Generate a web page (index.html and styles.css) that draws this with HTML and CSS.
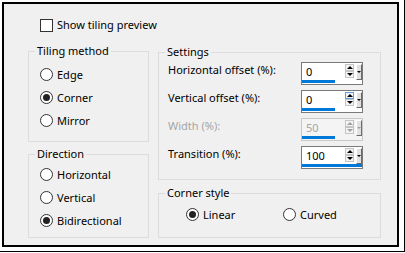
FILE: index.html
```html
<!DOCTYPE html>
<html lang="en">
<head>
    <meta charset="UTF-8">
    <title>Tiling</title>
    <link rel="stylesheet" href="styles.css">
</head>
<body>
<div class="shot">
    <div class="dialog">
        <div class="check-row"><span class="checkbox"></span>Show tiling preview</div>

        <div class="columns">
            <div class="col">
                <div class="group group-tiling">
                    <div class="group-title">Tiling method</div>
                    <div class="radio-list">
                        <div class="radio-row"><span class="radio"></span>Edge</div>
                        <div class="radio-row"><span class="radio checked"></span>Corner</div>
                        <div class="radio-row"><span class="radio"></span>Mirror</div>
                    </div>
                </div>
                <div class="group group-direction">
                    <div class="group-title">Direction</div>
                    <div class="radio-list">
                        <div class="radio-row"><span class="radio"></span>Horizontal</div>
                        <div class="radio-row"><span class="radio"></span>Vertical</div>
                        <div class="radio-row"><span class="radio checked"></span>Bidirectional</div>
                    </div>
                </div>
            </div>

            <div class="col">
                <div class="group group-settings">
                    <div class="group-title">Settings</div>
                    <div class="field-list">
                        <div class="field-row">
                            <span class="field-label">Horizontal offset (%):</span>
                            <div class="spin">
                                <div class="spin-top">
                                    <span class="spin-value">0</span>
                                    <div class="spin-arrows"><span class="arrow up"></span><span class="arrow down"></span></div>
                                    <span class="spin-drop"></span>
                                </div>
                                <div class="spin-bar"></div>
                            </div>
                        </div>
                        <div class="field-row">
                            <span class="field-label">Vertical offset (%):</span>
                            <div class="spin">
                                <div class="spin-top">
                                    <span class="spin-value">0</span>
                                    <div class="spin-arrows"><span class="arrow up hover"></span><span class="arrow down"></span></div>
                                    <span class="spin-drop"></span>
                                </div>
                                <div class="spin-bar"></div>
                            </div>
                        </div>
                        <div class="field-row disabled">
                            <span class="field-label">Width (%):</span>
                            <div class="spin">
                                <div class="spin-top">
                                    <span class="spin-value">50</span>
                                    <div class="spin-arrows"><span class="arrow up"></span><span class="arrow down"></span></div>
                                    <span class="spin-drop"></span>
                                </div>
                                <div class="spin-bar"></div>
                            </div>
                        </div>
                        <div class="field-row">
                            <span class="field-label">Transition (%):</span>
                            <div class="spin">
                                <div class="spin-top">
                                    <span class="spin-value">100</span>
                                    <div class="spin-arrows"><span class="arrow up"></span><span class="arrow down"></span></div>
                                    <span class="spin-drop"></span>
                                </div>
                                <div class="spin-bar full"></div>
                            </div>
                        </div>
                    </div>
                </div>
                <div class="group group-corner">
                    <div class="group-title">Corner style</div>
                    <div class="corner-row">
                        <div class="radio-row corner-item"><span class="radio checked"></span>Linear</div>
                        <div class="radio-row corner-item"><span class="radio"></span>Curved</div>
                    </div>
                </div>
            </div>
        </div>
    </div>
</div>
</body>
</html>
```

FILE: styles.css
```css
body {
    margin: 0;
    background-color: #fff;
    font-family: "Noto Sans", sans-serif;
    font-size: 11px;
    line-height: 16px;
    color: #000;
}
.shot {
    width: 405px;
    height: 252px;
    box-sizing: border-box;
    padding: 2px 0 0 2px;
    border-right: 1px solid #000;
    border-bottom: 1px solid #000;
}
.dialog {
    width: 397px;
    height: 245px;
    box-sizing: border-box;
    border: 2px solid #000;
    background-color: #f0f0f0; /* Windows dialog grey */
    padding: 13px 0 0 24px;
}

/* checkbox + radio */
.check-row {
    display: flex;
    align-items: center;
    margin-left: 12px;
    height: 16px;
}
.checkbox {
    width: 13px;
    height: 13px;
    box-sizing: border-box;
    border: 1px solid #333;
    background-color: #fff;
    margin-right: 4px;
}
.radio {
    width: 13px;
    height: 13px;
    box-sizing: border-box;
    border: 1px solid #333;
    border-radius: 50%;
    background-color: #fff;
    margin-right: 4px;
    display: flex;
    align-items: center;
    justify-content: center;
}
.radio.checked::after {
    content: "";
    width: 7px;
    height: 7px;
    border-radius: 50%;
    background-color: #222;
}
.radio-row {
    display: flex;
    align-items: center;
    height: 23px;
}

/* layout */
.columns {
    display: grid;
    grid-template-columns: 121px 223px;
    column-gap: 9px;
    margin-top: 18px;
}
.col {
    display: flex;
    flex-direction: column;
}
.group {
    box-sizing: border-box;
    border: 1px solid #dcdcdc;
}
.group-title {
    width: fit-content;
    margin: -9px 0 0 6px;
    padding: 0 2px;
    background-color: #f0f0f0;
}
.group-tiling {
    height: 91px;
}
.group-tiling .radio-list {
    margin-top: 4px;
    padding-left: 11px;
}
.group-direction {
    height: 84px;
    margin-top: 12px;
}
.group-direction .radio-list {
    margin-top: 1px;
    padding-left: 11px;
}
.group-settings {
    height: 128px;
    margin-top: 1px;
}
.group-corner {
    height: 45px;
    margin-top: 13px;
}
.corner-row {
    display: flex;
    padding-left: 27px;
    margin-top: 2px;
}
.corner-item {
    width: 99px;
}

/* spin fields */
.field-list {
    margin-top: 2px;
    padding-left: 9px;
}
.field-row {
    display: flex;
    align-items: flex-start;
    height: 28px;
}
.field-label {
    width: 133px;
}
.spin {
    width: 62px;
    height: 23px;
    box-sizing: border-box;
    border: 1px solid #7a7a7a;
    background-color: #fff;
    padding-top: 1px;
}
.spin-top {
    display: flex;
    align-items: flex-start;
    height: 16px;
}
.spin-value {
    flex: 1;
    padding-left: 4px;
}
.spin-arrows {
    display: flex;
    flex-direction: column;
    margin-right: 2px;
}
.arrow {
    width: 9px;
    height: 7px;
    box-sizing: border-box;
    border: 1px solid #c4c4c4;
    background-color: #f4f4f4;
    display: flex;
    align-items: center;
    justify-content: center;
}
.arrow.hover {
    border-color: #5ea0e0;
}
.arrow::after {
    content: "";
    width: 0;
    height: 0;
    border-left: 3px solid transparent;
    border-right: 3px solid transparent;
}
.arrow.up::after {
    border-bottom: 3px solid #000;
}
.arrow.down::after {
    border-top: 3px solid #000;
}
.spin-drop {
    width: 6px;
    height: 16px;
    box-sizing: border-box;
    border-top: 1px solid #fff;
    border-left: 1px solid #fff;
    border-right: 1px solid #6a6a6a;
    border-bottom: 1px solid #6a6a6a;
    background-color: #e1e1e1;
    display: flex;
    align-items: center;
    justify-content: center;
}
.spin-drop::after {
    content: "";
    border-left: 2px solid transparent;
    border-right: 2px solid transparent;
    border-top: 2px solid #000;
}
.spin-bar {
    width: 33px;
    height: 3px;
    background-color: #0078d7;
}
.spin-bar.full {
    width: 100%;
}
.disabled .field-label,
.disabled .spin-value {
    color: #a6a6a6;
}
.disabled .spin {
    border-color: #c8c8c8;
    background-color: #f4f4f4;
}
.disabled .arrow::after {
    border-top-color: #a0a0a0;
    border-bottom-color: #a0a0a0;
}
.disabled .spin-drop::after {
    border-top-color: #a0a0a0;
}
```
